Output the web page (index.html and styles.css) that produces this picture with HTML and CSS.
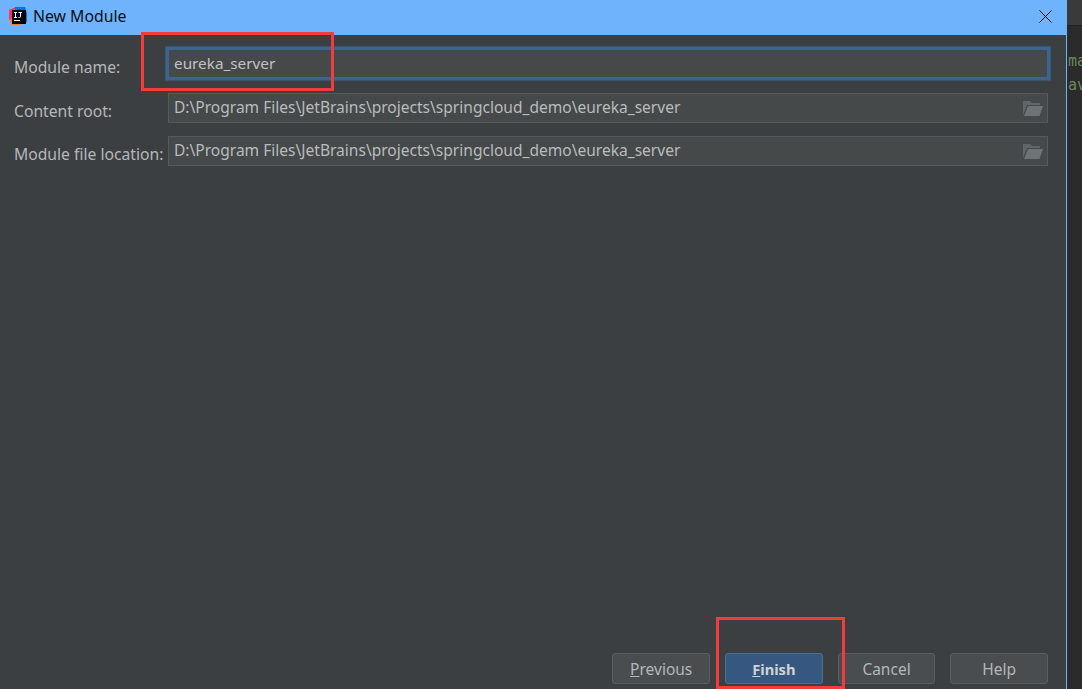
FILE: index.html
```html
<!DOCTYPE html>
<html lang="en">
<head>
    <meta charset="UTF-8">
    <title>New Module</title>
    <link rel="stylesheet" href="styles.css">
</head>
<body>
    <div class="dialog">
        <div class="titlebar">
            <svg class="app-icon" width="18" height="18" viewBox="0 0 18 18">
                <path d="M0 3 L7 0 L10 9 L3 17 L0 12 Z" fill="#f0386b"/>
                <path d="M6 0 L16 0 L18 6 L18 15 L13 17 L8 9 Z" fill="#0a72e8"/>
                <path d="M0 13 L9 9 L11 18 L3 18 Z" fill="#fc801d"/>
                <rect x="3" y="3" width="14" height="14" fill="#000"/>
                <rect x="5" y="13" width="6" height="1" fill="#fff"/>
                <path d="M5 5.500 H8 M6.500 5.500 V10.500 M5 10.500 H8 M9.500 5.500 H13 M11.500 5.500 V9.500 Q11.500 10.500 10.500 10.500 H9.500" stroke="#fff" stroke-width="1" fill="none"/>
            </svg>
            <span class="title">New Module</span>
            <svg class="close" width="13" height="13" viewBox="0 0 13 13">
                <path d="M0.500 0.500 L12.500 12.500 M12.500 0.500 L0.500 12.500" stroke="#000" stroke-width="1" fill="none"/>
            </svg>
        </div>
        <div class="content">
            <div class="form">
                <div class="row row-name">
                    <label>Module name:</label>
                    <div class="field focused"><span class="name-text">eureka_server</span></div>
                </div>
                <div class="row row-root">
                    <label>Content root:</label>
                    <div class="field">
                        <span class="field-text">D:\Program Files\JetBrains\projects\springcloud_demo\eureka_server</span>
                        <svg class="folder" width="20" height="15" viewBox="0 0 20 15">
                            <path d="M0 14 V0 H7 L9 2 H17 V4 H4 Z" fill="#5f6668"/>
                            <path d="M5 5 H20 L16.500 15 H1 Z" fill="#6e7476"/>
                        </svg>
                    </div>
                </div>
                <div class="row row-file">
                    <label>Module file location:</label>
                    <div class="field">
                        <span class="field-text">D:\Program Files\JetBrains\projects\springcloud_demo\eureka_server</span>
                        <svg class="folder" width="20" height="15" viewBox="0 0 20 15">
                            <path d="M0 14 V0 H7 L9 2 H17 V4 H4 Z" fill="#5f6668"/>
                            <path d="M5 5 H20 L16.500 15 H1 Z" fill="#6e7476"/>
                        </svg>
                    </div>
                </div>
            </div>
            <div class="buttons">
                <button class="btn"><u>P</u>revious</button>
                <button class="btn primary"><u>F</u>inish</button>
                <button class="btn">Cancel</button>
                <button class="btn">Help</button>
            </div>
        </div>
    </div>
    <div class="editor">
        <div class="editor-tabs"></div>
        <div class="code">
            <div>ma</div>
            <div>av</div>
        </div>
    </div>
    <div class="mark mark-name"></div>
    <div class="mark mark-finish"></div>
</body>
</html>
```

FILE: styles.css
```css
html, body {
    margin: 0;
    padding: 0;
    height: 100%;
    overflow: hidden;
}
body {
    display: flex;
    font-family: "Noto Sans", "Open Sans", sans-serif;
    background: #2b2b2b;
}
.dialog {
    width: 1066px;
    height: 689px;
    flex: none;
    display: flex;
    flex-direction: column;
    border-right: 1px solid #6fb3fc;
}
.titlebar {
    height: 35px;
    background: #6fb3fc;
    display: flex;
    align-items: center;
    padding: 0 14px 3px 9px;
    box-sizing: border-box;
    color: #0a0f16;
    font-size: 15.8px;
}
.app-icon {
    margin-right: 6px;
}
.title {
    flex: 1;
}
.close {
    margin-top: 1px;
}
.content {
    flex: 1;
    background: #3c3f41;
    display: flex;
    flex-direction: column;
    justify-content: space-between;
    padding-bottom: 5px;
}
.form {
    padding: 15px 18px 0 14px;
}
.row {
    display: flex;
    align-items: center;
    color: #b4b7b9;
    font-size: 15.7px;
}
.row label {
    width: 154px;
    flex: none;
    white-space: nowrap;
    padding-top: 6px;
}
.row-name {
    height: 27px;
}
.row-root {
    height: 30px;
    margin-top: 16px;
}
.row-file {
    height: 30px;
    margin-top: 13px;
}
.field {
    flex: 1;
    height: 100%;
    box-sizing: border-box;
    background: #45494a;
    border: 1px solid #575a5c;
    padding: 0 4px 0 5px;
    display: flex;
    align-items: center;
    justify-content: space-between;
    color: #b9bcbe;
    font-size: 15.55px;
}
.field-text {
    margin-bottom: 2px;
}
.name-text {
    margin-bottom: 1px;
    font-size: 15.3px;
}
.folder {
    margin-top: 1px;
}
.field.focused {
    margin: 0 1px;
    border: none;
    padding-left: 5px;
    color: #c0c3c5;
    box-shadow: 0 0 0 3px #3c6490, 0 0 1px 4px rgba(60, 100, 144, 0.55);
}
.buttons {
    display: flex;
    justify-content: flex-end;
    gap: 15px;
    padding-right: 18px;
}
.btn {
    width: 97.67px;
    height: 31px;
    padding: 0;
    background: #4a4d4f;
    border: 1px solid #5b5e60;
    border-radius: 3px;
    color: #b4b7b9;
    font-family: inherit;
    font-size: 15.5px;
}
.btn.primary {
    background: #365880;
    border-color: #4c708c;
    color: #d0d3d5;
    font-weight: bold;
    font-size: 14.7px;
}
.editor {
    flex: 1;
    overflow: hidden;
}
.editor-tabs {
    height: 25px;
    background: #3a3a3a;
    border-bottom: 1px solid #232323;
}
.code {
    padding: 23px 0 0 1px;
    color: #6a8759;
    font-family: "DejaVu Sans Mono", monospace;
    font-size: 15px;
    line-height: 24px;
}
.mark {
    position: absolute;
    border: 3px solid #f23b3b;
    box-sizing: border-box;
}
.mark-name {
    left: 141px;
    top: 32px;
    width: 193px;
    height: 59px;
}
.mark-finish {
    left: 716px;
    top: 617px;
    width: 129px;
    height: 72px;
}
```
